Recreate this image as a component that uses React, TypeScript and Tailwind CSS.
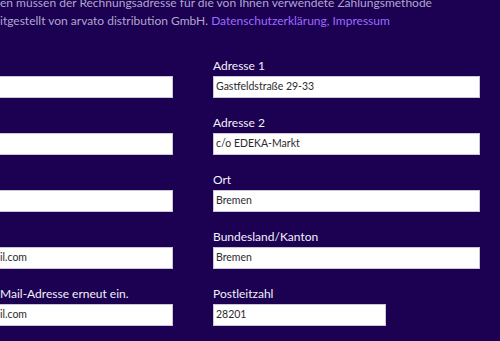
import React from "react";

const fields = [
  { left: { label: "", value: "" }, right: { label: "Adresse 1", value: "Gastfeldstraße 29-33" } },
  { left: { label: "", value: "" }, right: { label: "Adresse 2", value: "c/o EDEKA-Markt" } },
  { left: { label: "", value: "" }, right: { label: "Ort", value: "Bremen" } },
  { left: { label: "", value: "il.com" }, right: { label: "Bundesland/Kanton", value: "Bremen" } },
  {
    left: { label: "Mail-Adresse erneut ein.", value: "il.com" },
    right: { label: "Postleitzahl", value: "28201", short: true },
  },
];

const Field = ({
  label,
  value,
  width,
  cutLeft,
}: {
  label: string;
  value: string;
  width: string;
  cutLeft?: boolean;
}) => (
  <div className="flex flex-col">
    <div className="h-[20px] text-[12px] leading-[20px] text-[#f2f0fa] whitespace-nowrap">{label}</div>
    <div
      className={`h-[22px] bg-white border border-[#c9c6d6] flex items-center text-[10.5px] text-[#2b2b2b] ${width} ${
        cutLeft ? "border-l-0 pl-0" : "pl-[2px]"
      }`}
    >
      {value}
    </div>
  </div>
);

export default function App() {
  return (
    <div
      className="w-[500px] h-[341px] overflow-hidden bg-[#1c0052]"
      style={{ fontFamily: 'Lato, "Noto Sans", sans-serif' }}
    >
      <div className="-mt-[6px] text-[12px] leading-[18px] text-[#b1a7cf] whitespace-nowrap">
        <p>en müssen der Rechnungsadresse für die von Ihnen verwendete Zahlungsmethode</p>
        <p>
          itgestellt von arvato distribution GmbH.{" "}
          <a className="text-[#9c6bff]">Datenschutzerklärung, Impressum</a>
        </p>
      </div>
      <div className="mt-[26px] grid grid-cols-[173px_267px] gap-x-[40px] gap-y-[15px]">
        {fields.map((row, i) => (
          <React.Fragment key={i}>
            <Field label={row.left.label} value={row.left.value} width="w-[173px]" cutLeft />
            <Field
              label={row.right.label}
              value={row.right.value}
              width={row.right.short ? "w-[173px]" : "w-[267px]"}
            />
          </React.Fragment>
        ))}
      </div>
    </div>
  );
}
